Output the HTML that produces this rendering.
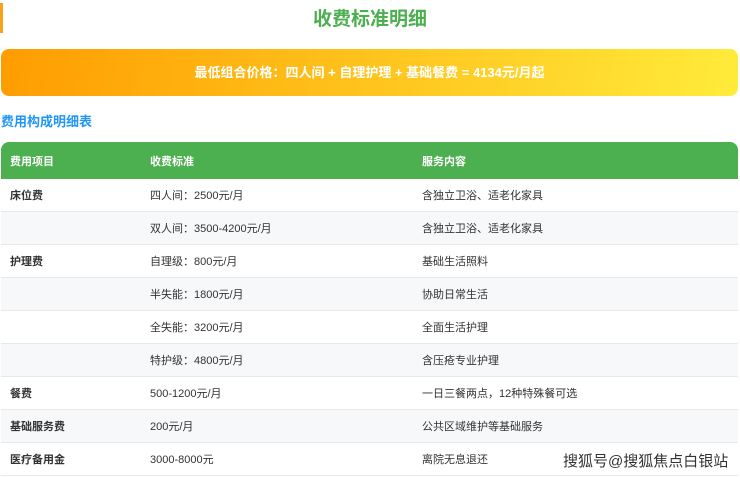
<!DOCTYPE html>
<html><head><meta charset="utf-8"><style>
body{margin:0;width:740px;height:477px;overflow:hidden;background:#fff;font-family:"Liberation Sans","Noto Sans CJK SC",sans-serif;position:relative}
.bar{position:absolute;left:0;top:3px;width:3px;height:30px;background:#f7a21b}
h1{position:absolute;top:7px;left:0;width:740px;text-align:center;margin:0;font-size:19px;color:#4caf50;font-weight:bold;line-height:26px}
.ban{position:absolute;left:1px;top:49px;width:737px;height:47px;border-radius:8px;background:linear-gradient(100deg,#ff9c00,#ffeb3b);color:#fff;font-weight:bold;font-size:13px;text-align:center;line-height:47px}
.sub{position:absolute;left:1px;top:111px;font-size:13px;color:#2196f3;font-weight:bold}
table{position:absolute;left:1px;top:142px;width:737px;border-collapse:collapse;font-size:11px;color:#333}
th{background:#4caf50;color:#fff;text-align:left;height:37px;font-weight:bold;padding:0}
td{height:32px;padding:0;border-bottom:1px solid #e8e8e8}
th:first-child,td:first-child{padding-left:9px}
tr:nth-child(odd) td{background:#f7f8fa}
td:first-child{font-weight:bold}
.wm{position:absolute;left:563px;top:450px;font-size:15px;color:#333;text-shadow:0 0 2px #fff}
</style></head><body>
<div class="bar"></div>
<h1>收费标准明细</h1>
<div class="ban">最低组合价格：四人间 + 自理护理 + 基础餐费 = 4134元/月起</div>
<div class="sub">费用构成明细表</div>
<table>
<colgroup><col style="width:149px"><col style="width:272px"><col></colgroup>
<tr><th style="border-top-left-radius:8px">费用项目</th><th>收费标准</th><th style="border-top-right-radius:8px">服务内容</th></tr>
<tr><td>床位费</td><td>四人间：2500元/月</td><td>含独立卫浴、适老化家具</td></tr>
<tr><td></td><td>双人间：3500-4200元/月</td><td>含独立卫浴、适老化家具</td></tr>
<tr><td>护理费</td><td>自理级：800元/月</td><td>基础生活照料</td></tr>
<tr><td></td><td>半失能：1800元/月</td><td>协助日常生活</td></tr>
<tr><td></td><td>全失能：3200元/月</td><td>全面生活护理</td></tr>
<tr><td></td><td>特护级：4800元/月</td><td>含压疮专业护理</td></tr>
<tr><td>餐费</td><td>500-1200元/月</td><td>一日三餐两点，12种特殊餐可选</td></tr>
<tr><td>基础服务费</td><td>200元/月</td><td>公共区域维护等基础服务</td></tr>
<tr><td>医疗备用金</td><td>3000-8000元</td><td>离院无息退还</td></tr>
</table>
<div class="wm">搜狐号@搜狐焦点白银站</div>
</body></html>
